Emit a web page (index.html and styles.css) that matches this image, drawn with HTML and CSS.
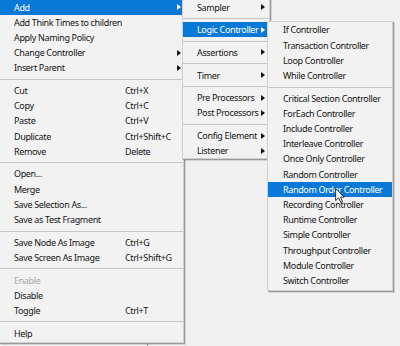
FILE: index.html
```html
<!DOCTYPE html>
<html>
<head>
<meta charset="utf-8">
<link rel="stylesheet" href="styles.css">
</head>
<body>
<div class="screen">
  <div class="pane-left"></div>
  <div class="pane-right"></div>

  <div class="menu menu-main">
    <div class="item active"><span class="label">Add</span><span class="arrow"></span></div>
    <div class="item"><span class="label">Add Think Times to children</span></div>
    <div class="item"><span class="label">Apply Naming Policy</span></div>
    <div class="item"><span class="label">Change Controller</span><span class="arrow"></span></div>
    <div class="item"><span class="label">Insert Parent</span><span class="arrow"></span></div>
    <div class="sep"></div>
    <div class="item"><span class="label">Cut</span><span class="key">Ctrl+X</span></div>
    <div class="item"><span class="label">Copy</span><span class="key">Ctrl+C</span></div>
    <div class="item"><span class="label">Paste</span><span class="key">Ctrl+V</span></div>
    <div class="item"><span class="label">Duplicate</span><span class="key">Ctrl+Shift+C</span></div>
    <div class="item"><span class="label">Remove</span><span class="key">Delete</span></div>
    <div class="sep"></div>
    <div class="item"><span class="label">Open...</span></div>
    <div class="item"><span class="label">Merge</span></div>
    <div class="item"><span class="label">Save Selection As...</span></div>
    <div class="item"><span class="label">Save as Test Fragment</span></div>
    <div class="sep"></div>
    <div class="item"><span class="label">Save Node As Image</span><span class="key">Ctrl+G</span></div>
    <div class="item"><span class="label">Save Screen As Image</span><span class="key">Ctrl+Shift+G</span></div>
    <div class="sep"></div>
    <div class="item disabled"><span class="label">Enable</span></div>
    <div class="item"><span class="label">Disable</span></div>
    <div class="item"><span class="label">Toggle</span><span class="key">Ctrl+T</span></div>
    <div class="sep"></div>
    <div class="item"><span class="label">Help</span></div>
  </div>

  <div class="menu menu-sub">
    <div class="item"><span>Sampler</span><span class="arrow"></span></div>
    <div class="sep"></div>
    <div class="item active"><span>Logic Controller</span><span class="arrow"></span></div>
    <div class="sep"></div>
    <div class="item"><span>Assertions</span><span class="arrow"></span></div>
    <div class="sep"></div>
    <div class="item"><span>Timer</span><span class="arrow"></span></div>
    <div class="sep"></div>
    <div class="item"><span>Pre Processors</span><span class="arrow"></span></div>
    <div class="item"><span>Post Processors</span><span class="arrow"></span></div>
    <div class="sep"></div>
    <div class="item"><span>Config Element</span><span class="arrow"></span></div>
    <div class="item"><span>Listener</span><span class="arrow"></span></div>
  </div>

  <div class="menu menu-logic">
    <div class="item"><span>If Controller</span></div>
    <div class="item"><span>Transaction Controller</span></div>
    <div class="item"><span>Loop Controller</span></div>
    <div class="item"><span>While Controller</span></div>
    <div class="sep"></div>
    <div class="item"><span>Critical Section Controller</span></div>
    <div class="item"><span>ForEach Controller</span></div>
    <div class="item"><span>Include Controller</span></div>
    <div class="item"><span>Interleave Controller</span></div>
    <div class="item"><span>Once Only Controller</span></div>
    <div class="item"><span>Random Controller</span></div>
    <div class="item active"><span>Random Order Controller</span></div>
    <div class="item"><span>Recording Controller</span></div>
    <div class="item"><span>Runtime Controller</span></div>
    <div class="item"><span>Simple Controller</span></div>
    <div class="item"><span>Throughput Controller</span></div>
    <div class="item"><span>Module Controller</span></div>
    <div class="item"><span>Switch Controller</span></div>
  </div>

  <svg class="cursor" width="10" height="15" viewBox="0 0 12 19">
    <path d="M0.5 0.5 L0.5 16 L4.2 12.4 L7 18.2 L9.2 17.2 L6.5 11.6 L11.3 11.6 Z" fill="#fff" stroke="#000" stroke-width="1" stroke-linejoin="miter"/>
  </svg>
</div>
</body>
</html>
```

FILE: styles.css
```css
html, body {
  margin: 0;
  padding: 0;
  background: #f0f0f0;
}

.screen {
  position: relative;
  width: 400px;
  height: 346px;
  overflow: hidden;
  display: flex;
  background: #f0f0f0;
  font-family: "Noto Sans", "Open Sans", sans-serif;
}

.pane-left {
  width: 147px;
  border-right: 1px solid #a0a0a0;
}

.pane-right {
  flex: 1;
}

.menu {
  position: absolute;
  background: #f2f2f2;
  border: 1px solid #cfcfcf;
  box-shadow: 1px 1px 0 #9a9a9a, 2px 2px 0 rgba(0, 0, 0, 0.12);
}

.menu-main {
  left: -1px;
  top: -1.6px;
  width: 183px;
  padding-bottom: 1px;
}

.menu-sub {
  left: 182px;
  top: -1.6px;
  width: 86px;
}

.menu-logic {
  left: 267px;
  top: 21.4px;
  width: 124px;
  padding-bottom: 1.5px;
}

.item {
  height: 15.2px;
  display: flex;
  align-items: center;
  padding-left: 14px;
  white-space: nowrap;
  color: #141414;
  font-size: 9px;
  letter-spacing: -0.35px;
}

.menu-logic .item {
  padding-left: 15px;
}

.item.active {
  background: #0a78d6;
  color: #fff;
}

.item.disabled {
  color: #a8a8a8;
}

.label {
  width: 111px;
  flex: none;
}

.arrow {
  margin-left: auto;
  margin-right: 2px;
  width: 0;
  height: 0;
  border-left: 4px solid #111;
  border-top: 3.5px solid transparent;
  border-bottom: 3.5px solid transparent;
}

.menu-sub .arrow {
  margin-right: 4px;
}

.item.active .arrow {
  border-left-color: #fff;
}

.sep {
  height: 7.5px;
  box-sizing: border-box;
  padding-top: 3.5px;
}

.sep::before {
  content: "";
  display: block;
  height: 1px;
  background: #c6c6c6;
}

.cursor {
  position: absolute;
  left: 335px;
  top: 188px;
}
```
